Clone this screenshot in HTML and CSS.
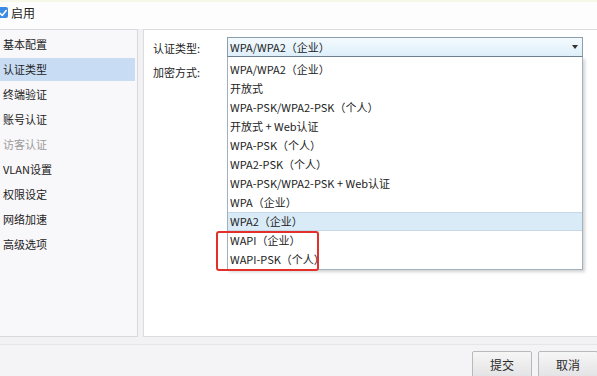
FILE: index.html
```html
<!DOCTYPE html>
<html lang="zh">
<head>
<meta charset="utf-8">
<title>认证类型</title>
<link rel="stylesheet" href="styles.css">
</head>
<body>
<div class="topbar">
  <span class="checkbox"><svg width="10" height="10" viewBox="0 0 10 10"><path d="M2 5.2 L4.2 7.4 L8.2 2.6" fill="none" stroke="#fff" stroke-width="1.6" stroke-linecap="round" stroke-linejoin="round"/></svg></span>
  <span class="enable">启用</span>
</div>
<div class="main">
  <ul class="sidebar">
    <li>基本配置</li>
    <li class="active">认证类型</li>
    <li>终端验证</li>
    <li>账号认证</li>
    <li class="disabled">访客认证</li>
    <li>VLAN设置</li>
    <li>权限设定</li>
    <li>网络加速</li>
    <li>高级选项</li>
  </ul>
  <div class="content">
    <div class="form">
      <label class="label">认证类型:</label>
      <div class="select-wrap">
        <div class="select"><span>WPA/WPA2（企业）</span><i class="arrow"></i></div>
        <ul class="options">
          <li>WPA/WPA2（企业）</li>
          <li>开放式</li>
          <li>WPA-PSK/WPA2-PSK（个人）</li>
          <li>开放式 + Web认证</li>
          <li>WPA-PSK（个人）</li>
          <li>WPA2-PSK（个人）</li>
          <li>WPA-PSK/WPA2-PSK + Web认证</li>
          <li>WPA（企业）</li>
          <li class="hover">WPA2（企业）</li>
          <li>WAPI（企业）</li>
          <li>WAPI-PSK（个人）</li>
          <span class="annot"></span>
        </ul>
      </div>
      <label class="label">加密方式:</label>
      <div></div>
    </div>
  </div>
</div>
<div class="footer">
  <button class="btn">提交</button>
  <button class="btn">取消</button>
</div>
</body>
</html>
```
FILE: styles.css
```css
* { box-sizing: border-box; }
html, body { margin: 0; padding: 0; }
body {
  width: 597px;
  height: 376px;
  overflow: hidden;
  background: #f2f1f4;
  font-family: "Noto Sans CJK SC", "Liberation Sans", sans-serif;
  font-size: 11px;
  color: #222;
}
.topbar {
  height: 30px;
  background: #fdfdfd;
  border-top: 2px solid #f6f9ea;
  display: flex;
  align-items: center;
  padding-bottom: 6px;
  border-bottom: 1px solid #efeff1;
}
.checkbox {
  width: 11px;
  height: 11px;
  margin-left: -3px;
  background: #3b8ae6;
  border-radius: 2px;
  display: flex;
  align-items: center;
  justify-content: center;
}
.enable { margin-left: 3px; font-size: 12px; line-height: 16px; }
.main {
  display: flex;
  height: 308px;
  gap: 5px;
  margin-top: -1px;
}
.sidebar {
  list-style: none;
  margin: 0;
  padding: 3px 0 0 0;
  width: 138px;
  background: #f8f7f9;
  border: 1px solid #d9d8dd;
  border-left: none;
  display: flex;
  flex-direction: column;
  gap: 2px;
}
.sidebar li {
  height: 23px;
  line-height: 23px;
  padding-left: 3px;
  margin-right: 2px;
}
.sidebar li.active { background: #c8dcf4; }
.sidebar li.disabled { color: #9c9c9c; }
.content {
  flex: 1;
  background: #fff;
  border: 1px solid #dcdbe0;
  border-right: none;
  padding: 7px 14px 0 9px;
}
.form {
  display: grid;
  grid-template-columns: 74px 1fr;
  row-gap: 4px;
}
.label { height: 20px; line-height: 20px; padding-top: 1px; }
.select-wrap { position: relative; }
.select {
  height: 20px;
  line-height: 18px;
  border: 1px solid #8c9eab;
  border-bottom-color: #6f8292;
  background: linear-gradient(#f3fafe, #deeffa);
  display: flex;
  align-items: center;
  justify-content: space-between;
  padding: 0 4px 0 2px;
}
.arrow {
  width: 0;
  height: 0;
  border-left: 3px solid transparent;
  border-right: 3px solid transparent;
  border-top: 4px solid #333;
}
.options {
  position: absolute;
  top: 20px;
  left: 0;
  right: 0;
  margin: 0;
  padding: 3px 0 0 0;
  list-style: none;
  background: #fff;
  border: 1px solid #a2b1bf;
  border-top: none;
  box-shadow: 2px 2px 3px rgba(0,0,0,0.18);
  z-index: 2;
}
.options li {
  height: 19px;
  line-height: 19px;
  padding-left: 2px;
}
.options li.hover {
  background: #daebf8;
  box-shadow: inset 0 1px 0 #c3d9ea, inset 0 -1px 0 #c3d9ea;
}
.annot {
  position: absolute;
  left: -12px;
  top: 174px;
  width: 103px;
  height: 40px;
  border: 2px solid #e2302b;
  border-radius: 3px;
}
.footer {
  margin-top: 7px;
  height: 32px;
  border-top: 1px solid #e6e5e9;
  background: #f4f3f6;
  display: flex;
  justify-content: flex-end;
  gap: 6px;
  padding-top: 6px;
  margin-right: -1px;
}
.btn {
  width: 60px;
  height: 27px;
  font-family: inherit;
  font-size: 12px;
  color: #2b2b2b;
  border: 1px solid #b9b9bd;
  border-radius: 2px;
  background: linear-gradient(#f6f6f6, #e3e3e5);
  padding: 0;
}
```
